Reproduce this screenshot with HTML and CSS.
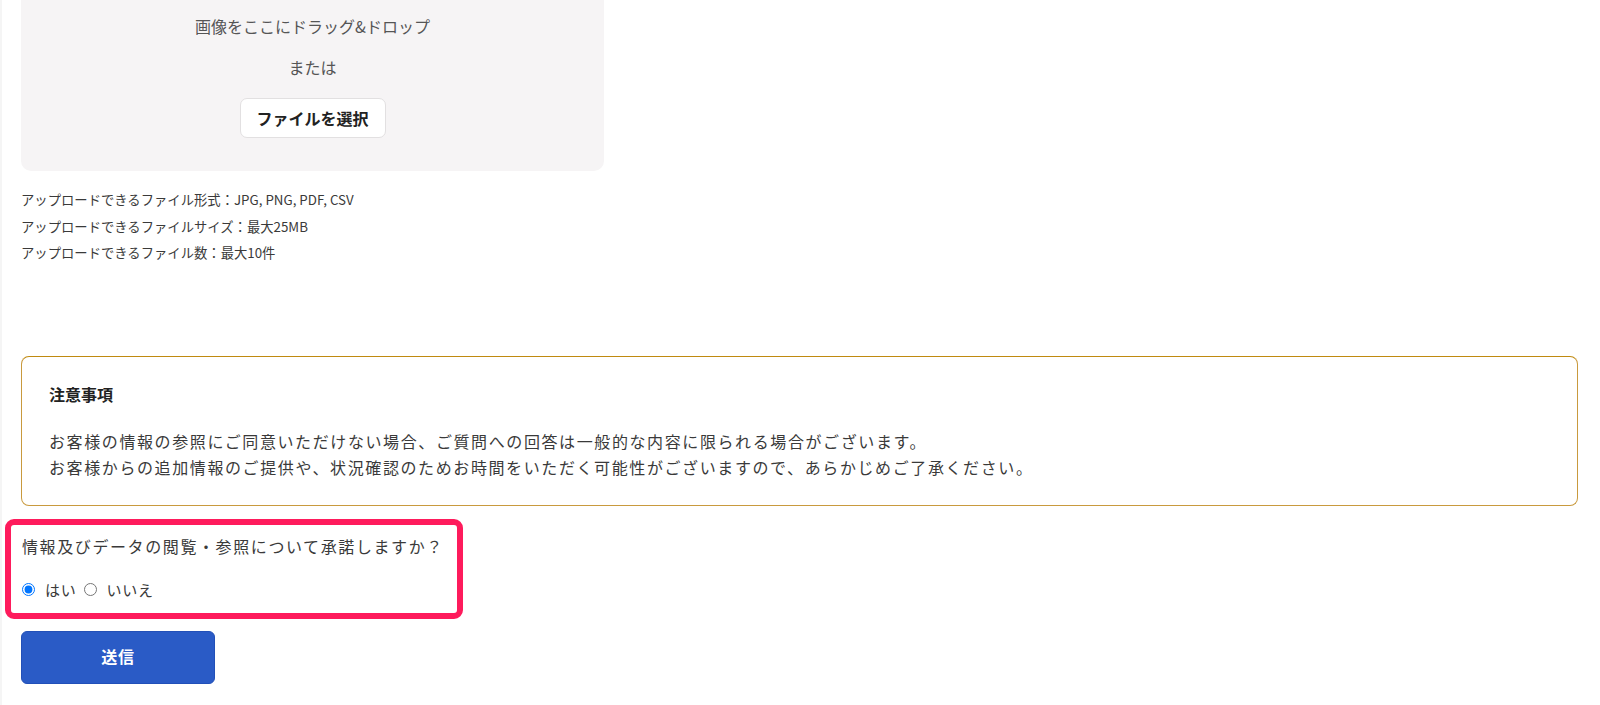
FILE: index.html
```html
<!DOCTYPE html>
<html lang="ja">
<head>
<meta charset="utf-8">
<title>お問い合わせ</title>
<link rel="stylesheet" href="styles.css">
</head>
<body>
<div class="page">
  <div class="dropzone">
    <p class="drop-text">画像をここにドラッグ&amp;ドロップ</p>
    <p class="drop-or">または</p>
    <button class="file-btn" type="button">ファイルを選択</button>
  </div>
  <ul class="file-info">
    <li>アップロードできるファイル形式：JPG, PNG, PDF, CSV</li>
    <li>アップロードできるファイルサイズ：最大25MB</li>
    <li>アップロードできるファイル数：最大10件</li>
  </ul>
  <section class="notice">
    <h2 class="notice-title">注意事項</h2>
    <p class="notice-body">お客様の情報の参照にご同意いただけない場合、ご質問への回答は一般的な内容に限られる場合がございます。<br>お客様からの追加情報のご提供や、状況確認のためお時間をいただく可能性がございますので、あらかじめご了承ください。</p>
  </section>
  <div class="consent">
    <p class="consent-q">情報及びデータの閲覧・参照について承諾しますか？</p>
    <div class="consent-opts">
      <label class="opt"><input type="radio" name="agree" checked><span>はい</span></label>
      <label class="opt"><input type="radio" name="agree"><span>いいえ</span></label>
    </div>
  </div>
  <button class="submit" type="button">送信</button>
</div>
</body>
</html>
```
FILE: styles.css
```css
* { box-sizing: border-box; }
html, body { margin: 0; padding: 0; background: #fff; }
body {
  font-family: "Noto Sans CJK JP", "Noto Sans", sans-serif;
  color: #3a3a3a;
}
.page {
  border-left: 2px solid #f5f5f5;
  padding: 0 22px 40px 19px;
  min-height: 705px;
}
.dropzone {
  width: 583px;
  background: #f6f4f5;
  border-radius: 0 0 10px 10px;
  padding: 14px 0 33px;
  display: flex;
  flex-direction: column;
  align-items: center;
}
.drop-text, .drop-or {
  margin: 0;
  font-size: 16px;
  line-height: 24px;
  color: #555;
}
.drop-or { margin-top: 17px; }
.file-btn {
  margin-top: 19px;
  height: 40px;
  width: 146px;
  background: #fff;
  border: 1px solid #e2e0e1;
  border-radius: 7px;
  font-family: inherit;
  font-size: 16px;
  font-weight: 700;
  color: #222;
  padding: 0;
}
.file-info {
  list-style: none;
  margin: 16px 0 0;
  padding: 0;
  font-size: 13.33px;
  line-height: 26.5px;
  color: #3a3a3a;
}
.notice {
  margin-top: 89px;
  border: 1px solid #c99a3e;
  border-top-color: #c08a10;
  border-radius: 8px;
  padding: 25px 27px 23px;
  height: 150px;
}
.notice-title {
  margin: 0;
  font-size: 16px;
  font-weight: 700;
  line-height: 25.6px;
  color: #222;
}
.notice-body {
  margin: 22px 0 0;
  font-size: 16px;
  letter-spacing: 0.1em;
  line-height: 25.6px;
  color: #3a3a3a;
}
.consent {
  margin: 13px 0 0 -16px;
  width: 458px;
  height: 100px;
  border: 6px solid #fe1b5c;
  border-radius: 9px;
  padding: 9px 0 0 11px;
}
.consent-q {
  margin: 0;
  font-size: 16px;
  letter-spacing: 0.1em;
  line-height: 24px;
  color: #3a3a3a;
}
.consent-opts {
  margin-top: 20px;
  display: flex;
  align-items: center;
  height: 24px;
}
.opt {
  display: flex;
  align-items: center;
  font-size: 15px;
  color: #3a3a3a;
  letter-spacing: 0.05em;
  margin-right: 7px;
}
.opt input {
  margin: 0 10px 0 0;
  width: 13px;
  height: 13px;
}
.submit {
  display: block;
  margin-top: 12px;
  width: 194px;
  height: 53px;
  background: #2a5bc6;
  border: 1px solid #2250b8;
  border-radius: 6px;
  color: #fff;
  font-family: inherit;
  font-size: 16px;
  font-weight: 700;
  letter-spacing: 0.05em;
  padding: 0 0 3px;
}
```
